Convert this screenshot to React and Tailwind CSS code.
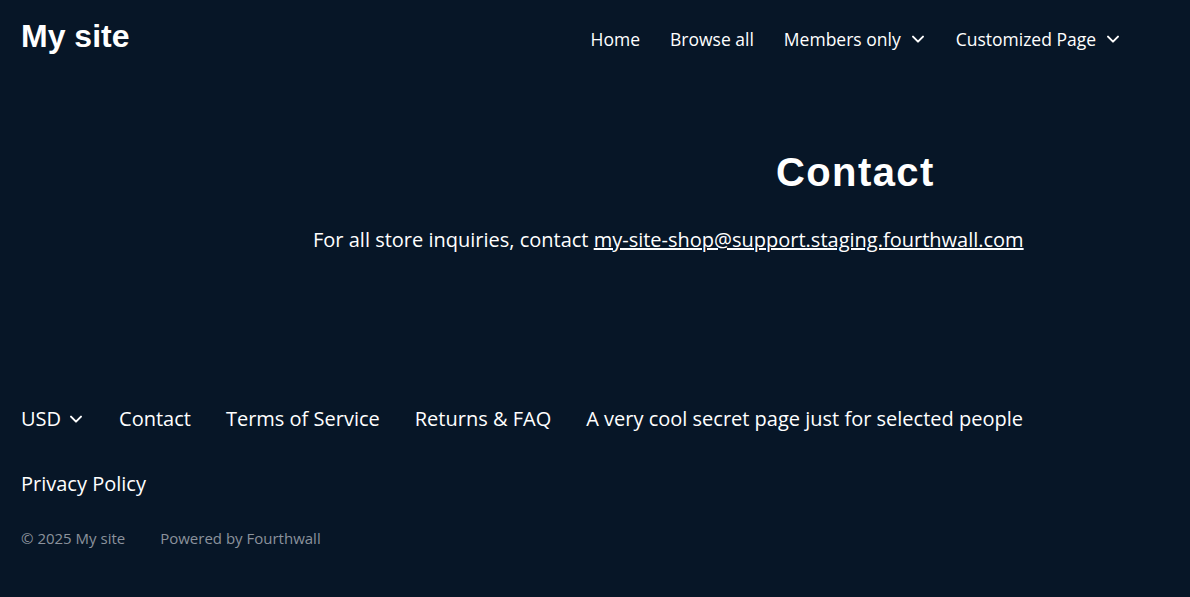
import React from 'react'

const Chevron = ({ className = '' }) => (
  <svg className={className} width="16" height="16" viewBox="0 0 24 24" fill="none" stroke="currentColor" strokeWidth="3" strokeLinecap="round" strokeLinejoin="round"><path d="M4.5 8.5l7.5 7.5 7.5-7.5" /></svg>
)

export default function App() {
  const nav = ['Home', 'Browse all']
  return (
    <div className="min-h-[597px] bg-[#071627] text-white" style={{ fontFamily: '"Open Sans", sans-serif' }}>
      <header className="flex items-center justify-between pl-[21px] pr-[69px] h-[74px]">
        <div className="text-[32px] font-bold mt-[-2px]" style={{ fontFamily: '"Liberation Sans", Arial, sans-serif' }}>My site</div>
        <nav className="flex items-center gap-[30px] text-[17.5px] mt-[4px]">
          {nav.map(n => <span key={n}>{n}</span>)}
          <span className="flex items-center gap-[9px]">Members only <Chevron /></span>
          <span className="flex items-center gap-[9px]">Customized Page <Chevron /></span>
        </nav>
      </header>
      <main className="h-[331px]">
        <h1 className="pl-[776px] pt-[74px] text-[40px] font-bold leading-[48px] tracking-[1.4px]" style={{ fontFamily: '"Liberation Sans", Arial, sans-serif' }}>Contact</h1>
        <p className="pl-[313px] mt-[29px] text-[20px]">For all store inquiries, contact <a href="#" className="underline">my-site-shop@support.staging.fourthwall.com</a></p>
      </main>
      <footer className="px-[21px]">
        <div className="flex flex-wrap items-center gap-x-[35px] gap-y-[37px] text-[20px] leading-[28px] w-[1040px]">
          <span className="flex items-center gap-[7px]">USD <Chevron /></span>
          <span>Contact</span>
          <span>Terms of Service</span>
          <span>Returns &amp; FAQ</span>
          <span>A very cool secret page just for selected people</span>
          <span>Privacy Policy</span>
        </div>
        <div className="flex gap-[35px] text-[15px] text-[#8b929c] mt-[29px]">
          <span>© 2025 My site</span>
          <span>Powered by Fourthwall</span>
        </div>
      </footer>
    </div>
  )
}
